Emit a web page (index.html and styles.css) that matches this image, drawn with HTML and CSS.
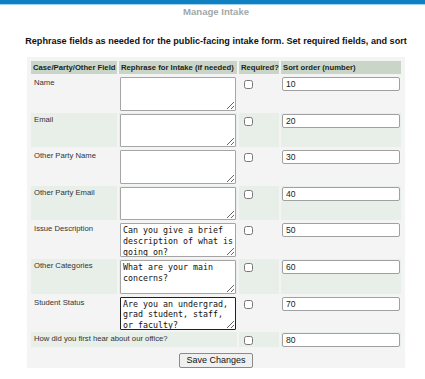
FILE: index.html
```html
<!DOCTYPE html>
<html>
<head>
  <title>Manage Intake</title>
  <link rel="stylesheet" href="styles.css">
</head>
<body>
  <div class="topbar"></div>

  <div class="page">
    <div class="title">Manage Intake</div>
    <h1>Rephrase fields as needed for the public-facing intake form. Set required fields, and sort</h1>

    <form class="intake">
      <table class="fields">
        <tr>
          <th class="c1">Case/Party/Other Field</th>
          <th class="c2">Rephrase for Intake (if needed)</th>
          <th class="c3">Required?</th>
          <th class="c4">Sort order (number)</th>
        </tr>
        <tr>
          <td class="label">Name</td>
          <td><textarea></textarea></td>
          <td><input type="checkbox"></td>
          <td><input type="text" class="sort" value="10"></td>
        </tr>
        <tr class="alt">
          <td class="label">Email</td>
          <td><textarea></textarea></td>
          <td><input type="checkbox"></td>
          <td><input type="text" class="sort" value="20"></td>
        </tr>
        <tr>
          <td class="label">Other Party Name</td>
          <td><textarea></textarea></td>
          <td><input type="checkbox"></td>
          <td><input type="text" class="sort" value="30"></td>
        </tr>
        <tr class="alt">
          <td class="label">Other Party Email</td>
          <td><textarea></textarea></td>
          <td><input type="checkbox"></td>
          <td><input type="text" class="sort" value="40"></td>
        </tr>
        <tr>
          <td class="label">Issue Description</td>
          <td><textarea>Can you give a brief description of what is going on?</textarea></td>
          <td><input type="checkbox"></td>
          <td><input type="text" class="sort" value="50"></td>
        </tr>
        <tr class="alt">
          <td class="label">Other Categories</td>
          <td><textarea>What are your main concerns?</textarea></td>
          <td><input type="checkbox"></td>
          <td><input type="text" class="sort" value="60"></td>
        </tr>
        <tr>
          <td class="label">Student Status</td>
          <td><textarea class="active">Are you an undergrad, grad student, staff, or faculty?</textarea></td>
          <td><input type="checkbox"></td>
          <td><input type="text" class="sort" value="70"></td>
        </tr>
        <tr class="alt">
          <td class="label" colspan="2">How did you first hear about our office?</td>
          <td><input type="checkbox"></td>
          <td><input type="text" class="sort" value="80"></td>
        </tr>
      </table>
      <div class="actions">
        <button type="button">Save Changes</button>
      </div>
    </form>
  </div>
</body>
</html>
```

FILE: styles.css
```css
body { margin: 0; padding: 0; font-family: "Liberation Sans", Arial, sans-serif; background: white; color: #222; }
.topbar { height: 4px; background: #0f80c2; border-bottom: 1px solid #a6d3ec; }
.page { padding-left: 7px; text-align: center; }
.title { font-size: 9.6px; font-weight: bold; color: #a2aaa8; margin-top: 1px; line-height: 12px; }
h1 { font-size: 9.1px; font-weight: bold; color: #111; margin: 17px 0 0; line-height: 12px; }
.intake { width: 374px; margin: 10px 0 0 20px; padding: 2px 2px 0; background: #f4f4f4; }
.fields { width: 374px; table-layout: fixed; border-spacing: 2px; font-size: 7.7px; text-align: left; }
.fields th { background: #c9d6c7; font-weight: bold; color: #222; padding: 1px 2px; line-height: 11px; height: 11px; white-space: nowrap; overflow: hidden; }
.fields td { padding: 1px 1px 0; vertical-align: top; color: #333; }
.fields tr.alt td { background: #e8eee8; }
.fields td.label { padding: 2px 3px 0; line-height: 10px; }
.c1 { width: 82px; }
.c2 { width: 114px; }
.c3 { width: 36px; }
.c4 { width: 116px; }
textarea { display: block; box-sizing: border-box; width: 116px; height: 33.6px; margin: 0; padding: 1px 2px; border: 1px solid #a5a5a5; border-radius: 1px; font-family: "DejaVu Sans Mono", monospace; font-size: 8.3px; line-height: 10.6px; color: #111; overflow: hidden; background: white; }
textarea.active { border-color: #222; }
input[type="checkbox"] { width: 9px; height: 9px; margin: 3px 0 0 4px; display: block; }
.sort { display: block; box-sizing: border-box; width: 118px; height: 14px; margin: 0; padding: 0 3px; border: 1px solid #a0a0a0; border-radius: 2px; font-family: "Liberation Sans", Arial, sans-serif; font-size: 8.6px; color: #222; }
.actions { text-align: center; }
button { font-family: "Liberation Sans", Arial, sans-serif; font-size: 9px; height: 15px; padding: 0 6px; border: 1px solid #8a8a8a; border-radius: 2px; background: #f0f0f0; color: #111; line-height: 12px; }
```
